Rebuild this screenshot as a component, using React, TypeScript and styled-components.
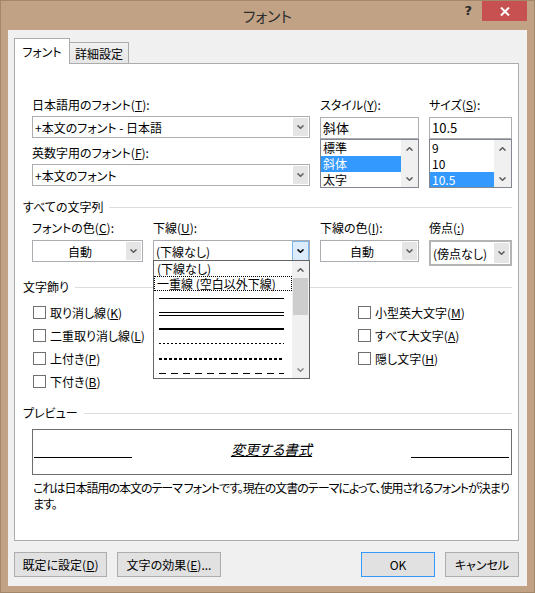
import styled, { createGlobalStyle, css } from 'styled-components'
import type { ReactNode } from 'react'

const GlobalStyle = createGlobalStyle`
  html, body {
    margin: 0;
    padding: 0;
    background: #fff;
  }
  body {
    font-family: 'Noto Sans CJK JP', 'Noto Sans', sans-serif;
    font-size: 12px;
    font-feature-settings: 'palt';
    color: #000;
  }
  * {
    box-sizing: border-box;
  }
`

type StrokeKind = 'single' | 'double' | 'thick' | 'dotted' | 'heavyDotted' | 'dashed'

interface ChevronProps {
  up?: boolean
  color?: string
}

const Chevron = ({ up, color = '#606060' }: ChevronProps) => (
  <svg width='7' height='4' viewBox='0 0 7 4'>
    <polyline
      points={up ? '0.5,3.6 3.5,0.7 6.5,3.6' : '0.5,0.4 3.5,3.3 6.5,0.4'}
      fill='none'
      stroke={color}
      strokeWidth='1.5'
    />
  </svg>
)

interface ComboProps {
  text: string
  center?: boolean
  open?: boolean
  framed?: boolean
  children?: ReactNode
}

const Combo = ({ text, center, open, framed, children }: ComboProps) => (
  <ComboBox $framed={framed}>
    <ComboText $center={center}>{text}</ComboText>
    <DropButton $active={open}>
      <Chevron color={open ? '#000' : '#606060'} />
    </DropButton>
    {children}
  </ComboBox>
)

interface ListProps {
  items: string[]
  selected: string
}

const List = ({ items, selected }: ListProps) => (
  <ListFrame>
    <ListItems>
      {items.map((item) => (
        <ListItem key={item} $selected={item === selected}>{item}</ListItem>
      ))}
    </ListItems>
    <ScrollBar>
      <ScrollArrow><Chevron up /></ScrollArrow>
      <ScrollArrow><Chevron /></ScrollArrow>
    </ScrollBar>
  </ListFrame>
)

const Key = ({ k }: { k: string }) => (
  <>(<u>{k}</u>)</>
)

const strokes: StrokeKind[] = ['single', 'double', 'thick', 'dotted', 'heavyDotted', 'dashed']

const leftChecks = [
  { text: '取り消し線', k: 'K' },
  { text: '二重取り消し線', k: 'L' },
  { text: '上付き', k: 'P' },
  { text: '下付き', k: 'B' },
]

const rightChecks = [
  { text: '小型英大文字', k: 'M' },
  { text: 'すべて大文字', k: 'A' },
  { text: '隠し文字', k: 'H' },
]

export default function App() {
  return (
    <>
      <GlobalStyle />
      <Window>
        <TitleBar>
          <span />
          <Title>フォント</Title>
          <Controls>
            <HelpGlyph>?</HelpGlyph>
            <CloseButton>
              <svg width='10' height='9' viewBox='0 0 10 9'>
                <path d='M1 0.5 L9 8.5 M9 0.5 L1 8.5' stroke='#fff' strokeWidth='2' />
              </svg>
            </CloseButton>
          </Controls>
        </TitleBar>

        <Client>
          <TabStrip>
            <Tab $active>フォント</Tab>
            <Tab>詳細設定</Tab>
          </TabStrip>

          <Panel>
            <TopGrid>
              <Column>
                <FieldLabel>日本語用のフォント<Key k='T' />:</FieldLabel>
                <Combo text='+本文のフォント - 日本語' />
                <FieldLabel $mt={7}>英数字用のフォント<Key k='F' />:</FieldLabel>
                <Combo text='+本文のフォント' />
              </Column>
              <Column>
                <FieldLabel>スタイル<Key k='Y' />:</FieldLabel>
                <TextBox>斜体</TextBox>
                <List items={['標準', '斜体', '太字']} selected='斜体' />
              </Column>
              <Column>
                <FieldLabel>サイズ<Key k='S' />:</FieldLabel>
                <TextBox>10.5</TextBox>
                <List items={['9', '10', '10.5']} selected='10.5' />
              </Column>
            </TopGrid>

            <GroupHeader $mt={11}>すべての文字列</GroupHeader>
            <ColorGrid>
              <Column>
                <FieldLabel $mb={4}>フォントの色<Key k='C' />:</FieldLabel>
                <Combo text='自動' center />
              </Column>
              <Column>
                <FieldLabel $mb={4}>下線<Key k='U' />:</FieldLabel>
                <Combo text='(下線なし)' open>
                  <DropList>
                    <DropItems>
                      <DropItem>(下線なし)</DropItem>
                      <DropItem $focus>一重線 (空白以外下線)</DropItem>
                      {strokes.map((kind) => (
                        <StrokeRow key={kind}>
                          <Stroke $kind={kind} />
                        </StrokeRow>
                      ))}
                    </DropItems>
                    <DropScroll>
                      <ScrollArrow><Chevron up /></ScrollArrow>
                      <Thumb />
                      <ScrollArrow $bottom><Chevron color='#8a8a8a' /></ScrollArrow>
                    </DropScroll>
                  </DropList>
                </Combo>
              </Column>
              <Column>
                <FieldLabel $mb={4}>下線の色<Key k='I' />:</FieldLabel>
                <Combo text='自動' center />
              </Column>
              <Column>
                <FieldLabel $mb={4}>傍点<Key k=':' /></FieldLabel>
                <Combo text='(傍点なし)' framed />
              </Column>
            </ColorGrid>

            <GroupHeader $mt={13}>文字飾り</GroupHeader>
            <CheckGrid>
              {[...leftChecks, ...rightChecks].map((c) => (
                <CheckRow key={c.text}>
                  <CheckBox />
                  <span>{c.text}<Key k={c.k} /></span>
                </CheckRow>
              ))}
            </CheckGrid>

            <GroupHeader $mt={12}>プレビュー</GroupHeader>
            <PreviewBox>
              <SideLine />
              <SampleText>変更する書式</SampleText>
              <SideLine />
            </PreviewBox>
            <Description>
              これは日本語用の本文のテーマ フォントです。現在の文書のテーマによって、使用されるフォントが決まり
              <br />
              ます。
            </Description>
          </Panel>

          <ButtonRow>
            <DialogButton $width={93}>既定に設定<Key k='D' /></DialogButton>
            <DialogButton $width={104}>文字の効果<Key k='E' />...</DialogButton>
            <Spacer />
            <DialogButton $width={74} $primary>OK</DialogButton>
            <DialogButton $width={74}>キャンセル</DialogButton>
          </ButtonRow>
        </Client>
      </Window>
    </>
  )
}

const Window = styled.div`
  width: 535px;
  height: 593px;
  background: #c1a284;
  border: 1px solid #a3876b;
  display: flex;
  flex-direction: column;
`

const TitleBar = styled.div`
  height: 29px;
  display: grid;
  grid-template-columns: 1fr auto 1fr;
  padding: 0 7px;
`

const Title = styled.div`
  font-size: 15px;
  line-height: 29px;
  color: #2e2e2e;
`

const Controls = styled.div`
  justify-self: end;
  display: flex;
  align-items: flex-start;
`

const HelpGlyph = styled.span`
  font-family: 'DejaVu Sans', sans-serif;
  font-weight: bold;
  font-size: 13px;
  line-height: 14px;
  color: #2a2a2a;
  margin: 3px 10px 0 0;
`

const CloseButton = styled.div`
  width: 45px;
  height: 20px;
  background: #c75050;
  display: flex;
  align-items: center;
  justify-content: center;
`

const Client = styled.div`
  flex: 1;
  margin: 0 7px 6px 7px;
  background: #f0f0f0;
  padding: 8px 8px 9px 6px;
  display: flex;
  flex-direction: column;
`

const TabStrip = styled.div`
  display: flex;
  align-items: flex-end;
  height: 25px;
`

const Tab = styled.div<{ $active?: boolean }>`
  display: flex;
  align-items: center;
  justify-content: center;
  border: 1px solid #acacac;
  border-bottom: none;
  ${({ $active }) => $active ? css`
    width: 56px;
    height: 26px;
    margin-bottom: -1px;
    background: #fff;
    position: relative;
    z-index: 1;
  ` : css`
    width: 59px;
    height: 21px;
    border-left: none;
    background: linear-gradient(#f0f0f0, #e5e5e5);
  `}
`

const Panel = styled.div`
  height: 478px;
  background: #fff;
  border: 1px solid #acacac;
  padding: 33px 6px 0 8px;
`

const TopGrid = styled.div`
  display: grid;
  grid-template-columns: 278px 99px 83px;
  column-gap: 10px;
  align-items: start;
  margin-left: 9px;
`

const ColorGrid = styled.div`
  display: grid;
  grid-template-columns: 111px 157px 99px 83px;
  column-gap: 10px;
  align-items: start;
  margin: 5px 0 0 9px;
`

const Column = styled.div`
  display: flex;
  flex-direction: column;
`

const FieldLabel = styled.div<{ $mt?: number; $mb?: number }>`
  height: 16px;
  line-height: 16px;
  white-space: nowrap;
  margin-top: ${({ $mt }) => $mt ?? 0}px;
  margin-bottom: ${({ $mb }) => $mb ?? 3}px;
`

const ComboBox = styled.div<{ $framed?: boolean }>`
  position: relative;
  display: flex;
  height: ${({ $framed }) => $framed ? 26 : 22}px;
  background: #fff;
  border: ${({ $framed }) => $framed ? '2px solid #b4b4b4' : '1px solid #abadb3'};
`

const ComboText = styled.div<{ $center?: boolean }>`
  flex: 1;
  display: flex;
  align-items: center;
  justify-content: ${({ $center }) => $center ? 'center' : 'flex-start'};
  padding-left: 2px;
  white-space: nowrap;
  overflow: hidden;
`

const DropButton = styled.div<{ $active?: boolean }>`
  width: 17px;
  display: flex;
  align-items: center;
  justify-content: center;
  background: ${({ $active }) => $active ? '#dcecfc' : '#e5e5e5'};
  border: 1px solid ${({ $active }) => $active ? '#7eb4ea' : '#fff'};
`

const TextBox = styled.div`
  height: 22px;
  margin-top: 1px;
  border: 1px solid #abadb3;
  padding-left: 2px;
  line-height: 20px;
  font-size: 13px;
`

const ListFrame = styled.div`
  height: 49px;
  border: 1px solid #828790;
  display: flex;
  overflow: hidden;
`

const ListItems = styled.div`
  flex: 1;
  display: flex;
  flex-direction: column;
`

const ListItem = styled.div<{ $selected?: boolean }>`
  height: 16px;
  flex-shrink: 0;
  line-height: 16px;
  padding-left: 2px;
  font-size: 12px;
  background: ${({ $selected }) => $selected ? '#3399ff' : 'transparent'};
  color: ${({ $selected }) => $selected ? '#fff' : '#000'};
`

const ScrollBar = styled.div`
  width: 17px;
  background: #f0f0f0;
  display: flex;
  flex-direction: column;
  justify-content: space-between;
`

const ScrollArrow = styled.div<{ $bottom?: boolean }>`
  height: 17px;
  display: flex;
  align-items: center;
  justify-content: center;
  margin-top: ${({ $bottom }) => $bottom ? 'auto' : '0'};
`

const DropList = styled.div`
  position: absolute;
  top: calc(100% - 1px);
  left: -1px;
  right: -1px;
  height: 119px;
  background: #fff;
  border: 1px solid #646464;
  display: flex;
  overflow: hidden;
  z-index: 2;
`

const DropItems = styled.div`
  flex: 1;
  display: flex;
  flex-direction: column;
`

const DropItem = styled.div<{ $focus?: boolean }>`
  height: 15px;
  flex-shrink: 0;
  line-height: 13px;
  padding-left: 2px;
  white-space: nowrap;
  border: 1px ${({ $focus }) => $focus ? 'dotted #000' : 'solid transparent'};
`

const StrokeRow = styled.div`
  height: 15px;
  flex-shrink: 0;
  display: flex;
  align-items: center;
  padding: 0 8px 0 5px;
`

const strokeStyles: Record<StrokeKind, ReturnType<typeof css>> = {
  single: css`height: 1px; background: #000;`,
  double: css`height: 4px; border-top: 1px solid #000; border-bottom: 1px solid #000;`,
  thick: css`height: 2px; background: #000;`,
  dotted: css`height: 1px; background: repeating-linear-gradient(90deg, #000 0 2px, transparent 2px 4px);`,
  heavyDotted: css`height: 2px; background: repeating-linear-gradient(90deg, #000 0 3px, transparent 3px 5px);`,
  dashed: css`height: 1px; background: repeating-linear-gradient(90deg, #000 0 7px, transparent 7px 12px);`,
}

const Stroke = styled.div<{ $kind: StrokeKind }>`
  flex: 1;
  ${({ $kind }) => strokeStyles[$kind]}
`

const DropScroll = styled.div`
  width: 17px;
  background: #f0f0f0;
  display: flex;
  flex-direction: column;
`

const Thumb = styled.div`
  height: 37px;
  margin: 0 1px;
  background: #cdcdcd;
`

const GroupHeader = styled.div<{ $mt: number }>`
  display: flex;
  align-items: center;
  gap: 6px;
  height: 16px;
  line-height: 16px;
  margin-top: ${({ $mt }) => $mt}px;

  &::after {
    content: '';
    flex: 1;
    height: 1px;
    background: #dcdcdc;
  }
`

const CheckGrid = styled.div`
  display: grid;
  grid-template-columns: 325px 1fr;
  grid-template-rows: repeat(4, 23px);
  grid-auto-flow: column;
  margin: 6px 0 0 9px;
`

const CheckRow = styled.div`
  display: flex;
  align-items: center;
  gap: 4px;
  padding-left: 1px;
  white-space: nowrap;
`

const CheckBox = styled.span`
  width: 13px;
  height: 13px;
  border: 1px solid #707070;
  background: #fff;
`

const PreviewBox = styled.div`
  height: 46px;
  margin: 8px 0 0 9px;
  border: 1px solid #6d6d6d;
  padding: 0 2px 0 1px;
  display: flex;
  justify-content: space-between;
  align-items: flex-start;
`

const SideLine = styled.div`
  width: 98px;
  height: 1px;
  margin-top: 27px;
  background: #000;
`

const SampleText = styled.span`
  font-size: 14px;
  line-height: 18px;
  font-style: italic;
  text-decoration: underline;
  margin-top: 10px;
`

const Description = styled.div`
  margin: 5px 0 0 10px;
  line-height: 16px;
  letter-spacing: -1px;
  white-space: nowrap;
`

const ButtonRow = styled.div`
  display: flex;
  gap: 10px;
  height: 25px;
  margin-top: 11px;
`

const Spacer = styled.div`
  flex: 1;
`

const DialogButton = styled.div<{ $width: number; $primary?: boolean }>`
  width: ${({ $width }) => $width}px;
  display: flex;
  align-items: center;
  justify-content: center;
  background: #e1e1e1;
  border: 1px solid ${({ $primary }) => $primary ? '#3399ff' : '#adadad'};
  white-space: nowrap;
`
